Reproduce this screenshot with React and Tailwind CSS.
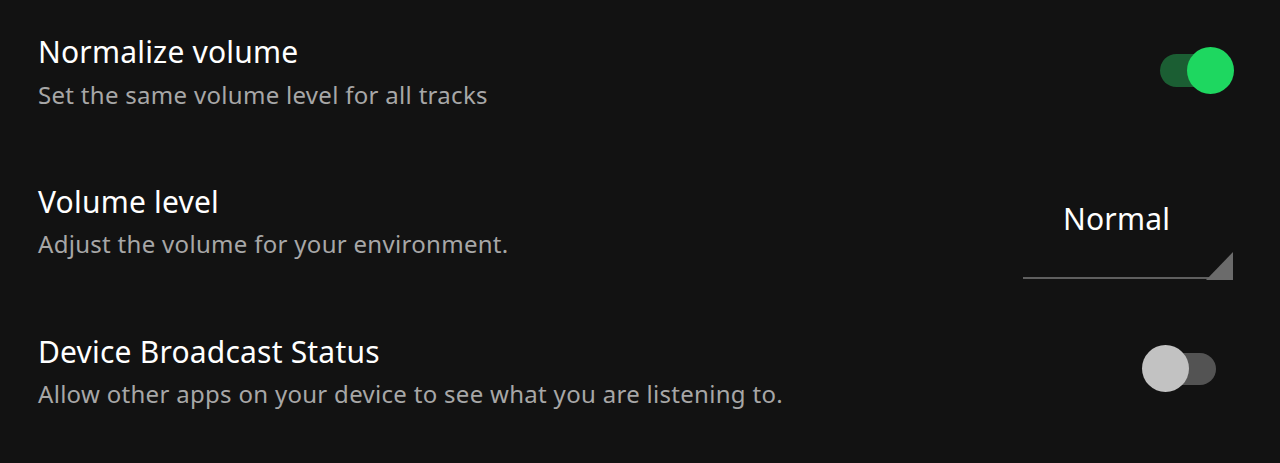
export default function App() {
  const font = { fontFamily: '"Noto Sans", "Open Sans", sans-serif' };
  return (
    <div className="w-[1280px] h-[463px] bg-[#121212] overflow-hidden" style={font}>
      <div className="flex flex-col pl-[38px] pr-[44px] pt-[32px]">
        <div className="flex items-start justify-between h-[150px]">
          <div className="flex flex-col">
            <div className="text-[30px] leading-[40px] text-white tracking-[0.2px]">Normalize volume</div>
            <div className="text-[24px] leading-[32px] text-[#a7a7a7] mt-[7px] tracking-[0.3px]">Set the same volume level for all tracks</div>
          </div>
          <div className="relative w-[74px] h-[48px] mr-[2px] mt-[15px]">
            <div className="absolute left-0 top-[7px] w-[60px] h-[33px] rounded-full bg-[#1b5e33]" />
            <div className="absolute right-0 top-0 w-[47px] h-[47px] rounded-full bg-[#1ed760]" />
          </div>
        </div>
        <div className="flex items-start justify-between h-[150px]">
          <div className="flex flex-col">
            <div className="text-[30px] leading-[40px] text-white tracking-[0.2px]">Volume level</div>
            <div className="text-[24px] leading-[32px] text-[#a7a7a7] mt-[6px] tracking-[0.3px]">Adjust the volume for your environment.</div>
          </div>
          <div className="relative w-[210px] h-[80px] mr-[3px] mt-[17px]">
            <div className="absolute left-[40px] top-0 text-[30px] leading-[40px] text-white tracking-[0.2px]">Normal</div>
            <div className="absolute left-0 bottom-0 w-full h-[2px] bg-[#5f5f5f]" />
            <svg className="absolute right-0 bottom-[-1px]" width="27" height="28" viewBox="0 0 27 28">
              <polygon points="27,0 27,28 0,28" fill="#6b6b6b" />
            </svg>
          </div>
        </div>
        <div className="flex items-start justify-between h-[150px]">
          <div className="flex flex-col">
            <div className="text-[30px] leading-[40px] text-white tracking-[0.2px]">Device Broadcast Status</div>
            <div className="text-[24px] leading-[32px] text-[#a7a7a7] mt-[6px] tracking-[0.3px]">Allow other apps on your device to see what you are listening to.</div>
          </div>
          <div className="relative w-[74px] h-[48px] mr-[20px] mt-[13px]">
            <div className="absolute right-0 top-[8px] w-[60px] h-[32px] rounded-full bg-[#535353]" />
            <div className="absolute left-0 top-0 w-[47px] h-[47px] rounded-full bg-[#c2c2c2]" />
          </div>
        </div>
      </div>
    </div>
  );
}
